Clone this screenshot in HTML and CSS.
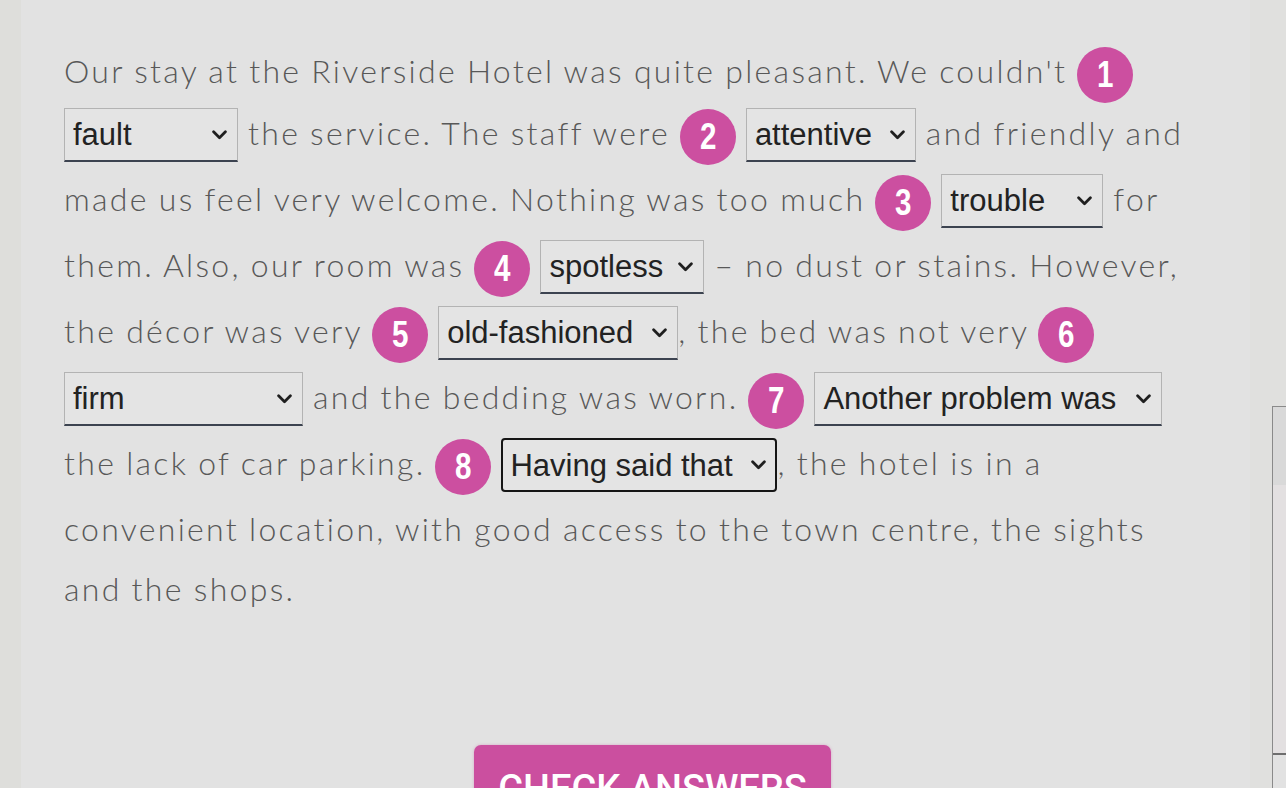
FILE: index.html
```html
<!DOCTYPE html>
<html lang="en">
<head>
<meta charset="utf-8">
<title>Hotel review</title>
<link rel="stylesheet" href="styles.css">
</head>
<body>
<div class="page">
  <div class="band"></div>
  <main class="panel">
    <p class="story">Our stay at the Riverside Hotel was quite pleasant. We couldn't <span class="num"><span class="digit">1</span></span><br><span class="pick"><select class="gap gap-1"><option>fault</option></select><svg class="chev" viewBox="0 0 14 9"><path d="M1.5 1.5 7 7l5.5-5.5"/></svg></span> the service. The staff were <span class="num"><span class="digit">2</span></span> <span class="pick"><select class="gap gap-2"><option>attentive</option></select><svg class="chev" viewBox="0 0 14 9"><path d="M1.5 1.5 7 7l5.5-5.5"/></svg></span> and friendly and<br>made us feel very welcome. Nothing was too much <span class="num"><span class="digit">3</span></span> <span class="pick"><select class="gap gap-3"><option>trouble</option></select><svg class="chev" viewBox="0 0 14 9"><path d="M1.5 1.5 7 7l5.5-5.5"/></svg></span> for<br>them. Also, our room was <span class="num"><span class="digit">4</span></span> <span class="pick"><select class="gap gap-4"><option>spotless</option></select><svg class="chev" viewBox="0 0 14 9"><path d="M1.5 1.5 7 7l5.5-5.5"/></svg></span> – no dust or stains. However,<br>the décor was very <span class="num"><span class="digit">5</span></span> <span class="pick"><select class="gap gap-5"><option>old-fashioned</option></select><svg class="chev" viewBox="0 0 14 9"><path d="M1.5 1.5 7 7l5.5-5.5"/></svg></span>, the bed was not very <span class="num"><span class="digit">6</span></span><br><span class="pick"><select class="gap gap-6"><option>firm</option></select><svg class="chev" viewBox="0 0 14 9"><path d="M1.5 1.5 7 7l5.5-5.5"/></svg></span> and the bedding was worn. <span class="num"><span class="digit">7</span></span> <span class="pick"><select class="gap gap-7"><option>Another problem was</option></select><svg class="chev" viewBox="0 0 14 9"><path d="M1.5 1.5 7 7l5.5-5.5"/></svg></span><br>the lack of car parking. <span class="num"><span class="digit">8</span></span> <span class="pick"><select class="gap gap-8 is-focused"><option>Having said that</option></select><svg class="chev" viewBox="0 0 14 9"><path d="M1.5 1.5 7 7l5.5-5.5"/></svg></span>, the hotel is in a<br>convenient location, with good access to the town centre, the sights<br>and the shops.</p>
    <div class="actions">
      <button class="check" type="button">Check answers</button>
    </div>
  </main>
  <aside class="rail">
    <div class="rail-box">
      <div class="rail-thumb"></div>
      <div class="rail-track"></div>
      <div class="rail-foot"></div>
    </div>
  </aside>
</div>
</body>
</html>
```
FILE: styles.css
```css
html, body {
  margin: 0;
  padding: 0;
  height: 100%;
  overflow: hidden;
}
body {
  background: #dfdfdc;
}
.page {
  display: flex;
  height: 788px;
}
.band {
  width: 21px;
  flex: none;
  background: #dededb;
}
.panel {
  flex: 1;
  background: #e2e2e2;
  padding: 41px 0 0 43px;
  min-width: 0;
}
.story {
  margin: 0;
  font-family: "Lato", "Liberation Sans", sans-serif;
  font-weight: 300;
  font-size: 32px;
  letter-spacing: 2.3px;
  word-spacing: -1px;
  line-height: 60px;
  color: #585858;
  white-space: nowrap;
}
.num {
  display: inline-block;
  width: 56px;
  height: 56px;
  border-radius: 50%;
  background: #cc4fa0;
  color: #fff;
  font-family: "Liberation Sans", Arial, sans-serif;
  font-weight: 700;
  font-size: 37px;
  letter-spacing: 0;
  line-height: 56px;
  text-align: center;
  vertical-align: middle;
}
.digit {
  display: inline-block;
  transform: scaleX(0.8);
}
.pick {
  position: relative;
  display: inline-block;
  vertical-align: middle;
  margin: 3px 0 7px;
  letter-spacing: 0;
  line-height: 0;
}
.gap {
  appearance: none;
  -webkit-appearance: none;
  display: block;
  height: 54px;
  margin: 0;
  font-family: "Liberation Sans", Arial, sans-serif;
  font-size: 31px;
  color: #222222;
  background-color: #e4e4e4;
  border: 1px solid #b3b3b3;
  border-bottom: 2px solid #3c4350;
  border-radius: 0;
  padding: 0 30px 0 8px;
}
.chev {
  position: absolute;
  right: 11px;
  top: 22px;
  width: 15px;
  height: 10px;
  fill: none;
  stroke: #1f1f1f;
  stroke-width: 2.6;
  stroke-linecap: round;
  stroke-linejoin: round;
  pointer-events: none;
}
.gap-1 { width: 174px; }
.gap-2 { width: 170px; }
.gap-3 { width: 162px; }
.gap-4 { width: 164px; }
.gap-5 { width: 240px; }
.gap-6 { width: 239px; }
.gap-7 { width: 348px; }
.gap-8 { width: 276px; }
.is-focused {
  border: 2px solid #151515;
  border-radius: 4px;
  padding-left: 7px;
}
.actions {
  display: flex;
  justify-content: center;
  padding: 126px 0 0 0;
  margin-left: -9px;
}
.check {
  width: 357px;
  height: 80px;
  border: none;
  border-radius: 7px;
  background: #cb4f9f;
  color: #fff;
  font-family: "Roboto", "Liberation Sans", sans-serif;
  font-weight: 500;
  font-size: 38px;
  line-height: 44px;
  text-transform: uppercase;
  padding: 22px 0 0;
  display: flex;
  justify-content: center;
  align-items: flex-start;
  box-shadow: 0 0 3px rgba(203, 79, 159, 0.4);
}
.rail {
  width: 36px;
  flex: none;
  background: #e0e0de;
  padding-top: 406px;
  padding-left: 22px;
  box-sizing: border-box;
  display: flex;
}
.rail-box {
  flex: 1;
  border-left: 1px solid #8a8a8a;
  border-top: 1px solid #8a8a8a;
  display: flex;
  flex-direction: column;
}
.rail-thumb {
  height: 78px;
  background: #d9d9d9;
}
.rail-track {
  height: 268px;
  background: #e3e0e1;
  border-bottom: 2px solid #6e6e6e;
}
.rail-foot {
  flex: 1;
  background: #e2e2e2;
}
```
